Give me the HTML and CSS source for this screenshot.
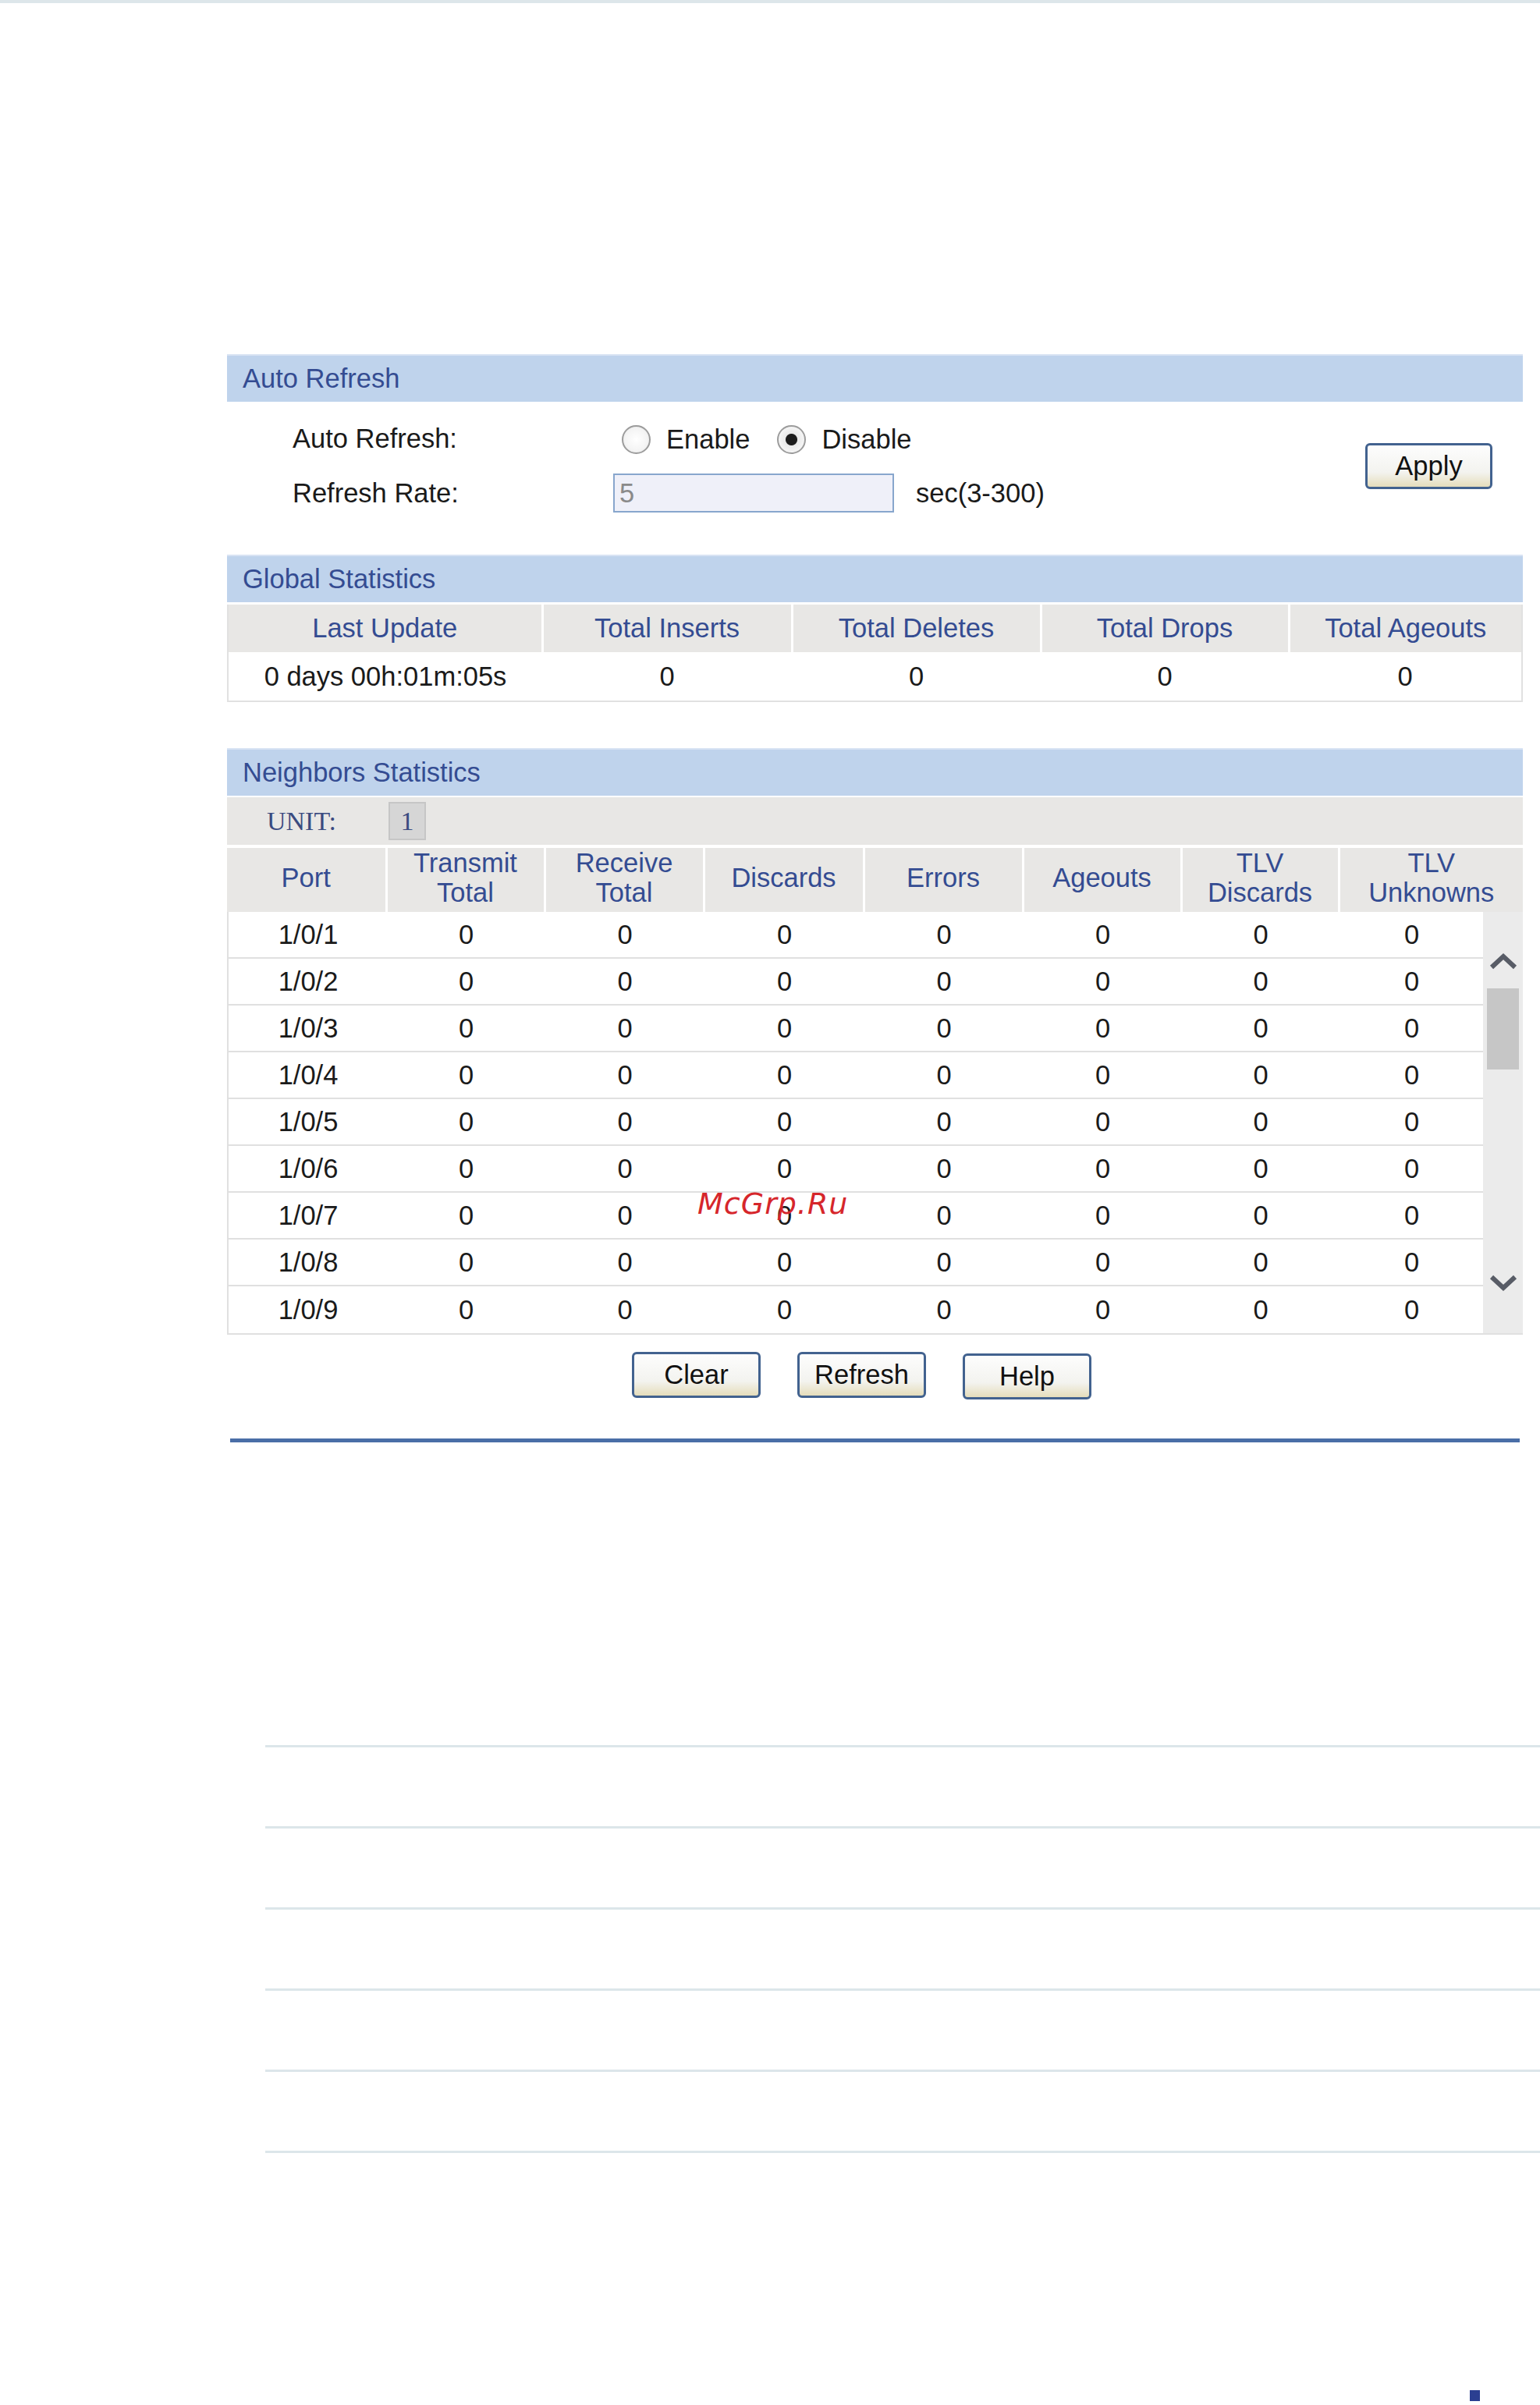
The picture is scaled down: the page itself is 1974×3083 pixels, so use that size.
FILE: index.html
```html
<!DOCTYPE html>
<html lang="en">
<head>
	<meta charset="utf-8">
	<title>LLDP Statistics</title>
	<meta name="viewport" content="width=device-width, initial-scale=1">
	<link rel="stylesheet" href="styles.css">
</head>
<body>
	<div class="topline"></div>
	<div class="panel">
		<div class="bar">Auto Refresh</div>
		<div class="refresh">
			<div class="fields">
				<span class="lbl">Auto Refresh:</span>
				<div class="ctl">
					<input type="radio" name="auto" class="radio" id="en"><label for="en" class="rlabel">Enable</label>
					<input type="radio" name="auto" class="radio" id="dis" checked><label for="dis" class="rlabel">Disable</label>
				</div>
				<span class="lbl">Refresh Rate:</span>
				<div class="ctl">
					<input type="text" class="rate" value="5">
					<span>sec(3-300)</span>
				</div>
			</div>
			<button class="btn apply">Apply</button>
		</div>

		<div class="bar">Global Statistics</div>
		<table class="gtable">
			<colgroup>
				<col style="width:403px"><col style="width:320px"><col style="width:319px"><col style="width:318px"><col>
			</colgroup>
			<tr>
				<th>Last Update</th><th>Total Inserts</th><th>Total Deletes</th><th>Total Drops</th><th>Total Ageouts</th>
			</tr>
			<tr>
				<td>0 days 00h:01m:05s</td><td>0</td><td>0</td><td>0</td><td>0</td>
			</tr>
		</table>

		<div class="bar nb">Neighbors Statistics</div>
		<div class="unit">
			<span>UNIT:</span>
			<span class="unit-box">1</span>
		</div>
		<table class="nhead">
			<colgroup>
				<col style="width:204px"><col style="width:203px"><col style="width:204px"><col style="width:205px"><col style="width:204px"><col style="width:203px"><col style="width:202px"><col>
			</colgroup>
			<tr>
				<th>Port</th><th>Transmit<br>Total</th><th>Receive<br>Total</th><th>Discards</th><th>Errors</th><th>Ageouts</th><th>TLV<br>Discards</th><th>TLV<br>Unknowns</th>
			</tr>
		</table>
		<div class="nbody">
			<table class="ntable">
				<colgroup>
					<col style="width:202px"><col style="width:203px"><col style="width:204px"><col style="width:205px"><col style="width:204px"><col style="width:203px"><col style="width:202px"><col>
				</colgroup>
				<tr><td>1/0/1</td><td>0</td><td>0</td><td>0</td><td>0</td><td>0</td><td>0</td><td>0</td></tr>
				<tr><td>1/0/2</td><td>0</td><td>0</td><td>0</td><td>0</td><td>0</td><td>0</td><td>0</td></tr>
				<tr><td>1/0/3</td><td>0</td><td>0</td><td>0</td><td>0</td><td>0</td><td>0</td><td>0</td></tr>
				<tr><td>1/0/4</td><td>0</td><td>0</td><td>0</td><td>0</td><td>0</td><td>0</td><td>0</td></tr>
				<tr><td>1/0/5</td><td>0</td><td>0</td><td>0</td><td>0</td><td>0</td><td>0</td><td>0</td></tr>
				<tr><td>1/0/6</td><td>0</td><td>0</td><td>0</td><td>0</td><td>0</td><td>0</td><td>0</td></tr>
				<tr><td>1/0/7</td><td>0</td><td>0</td><td>0</td><td>0</td><td>0</td><td>0</td><td>0</td></tr>
				<tr><td>1/0/8</td><td>0</td><td>0</td><td>0</td><td>0</td><td>0</td><td>0</td><td>0</td></tr>
				<tr><td>1/0/9</td><td>0</td><td>0</td><td>0</td><td>0</td><td>0</td><td>0</td><td>0</td></tr>
			</table>
			<div class="sbar">
				<svg class="arrow up" width="36" height="22" viewBox="0 0 36 22"><polyline points="3,19 18,5 33,19" fill="none" stroke="#585c66" stroke-width="6"/></svg>
				<div class="thumb"></div>
				<svg class="arrow down" width="36" height="22" viewBox="0 0 36 22"><polyline points="3,3 18,17 33,3" fill="none" stroke="#585c66" stroke-width="6"/></svg>
			</div>
		</div>
		<div class="actions">
			<button class="btn">Clear</button>
			<button class="btn">Refresh</button>
			<button class="btn help">Help</button>
		</div>
		<div class="rule"></div>
	</div>

	<div class="lines">
		<div class="ln"></div>
		<div class="ln"></div>
		<div class="ln"></div>
		<div class="ln"></div>
		<div class="ln"></div>
		<div class="ln"></div>
	</div>
	<div class="mark"></div>

	<div class="watermark">McGrp.Ru</div>
</body>
</html>
```

FILE: styles.css
```css
body {
	margin: 0;
	font-family: "Liberation Sans", Arial, sans-serif;
	font-size: 34.5px;
	color: #1a1a1a;
	background: #fff;
	position: relative;
}
.topline {
	height: 4px;
	background: #dde6ea;
}
.panel {
	width: 1661px;
	margin: 450px 0 0 291px;
}
.bar {
	height: 61px;
	box-sizing: border-box;
	border-top: 2px solid #d8e3f3;
	background: #bfd3ec;
	color: #344c92;
	padding-left: 20px;
	display: flex;
	align-items: center;
}
.refresh {
	display: flex;
	align-items: center;
	justify-content: space-between;
	padding: 15px 39px 47px 84px;
}
.fields {
	display: grid;
	grid-template-columns: 411px auto;
	grid-auto-rows: 64px;
	row-gap: 6px;
	align-items: center;
}
.ctl {
	display: flex;
	align-items: center;
}
.radio {
	appearance: none;
	-webkit-appearance: none;
	width: 37px;
	height: 37px;
	margin: 2px 20px 0 11px;
	border-radius: 50%;
	border: 2px solid #9c9c9c;
	box-sizing: border-box;
	background: radial-gradient(circle, #ffffff 0, #f4f4f4 60%, #e2e2e2 100%);
}
.radio:checked {
	background: radial-gradient(circle, #1c1c1c 0 7px, #e9e9e9 8px, #ffffff 100%);
}
.rlabel {
	margin: 3px 24px 0 0;
}
.rate {
	width: 360px;
	height: 50px;
	box-sizing: border-box;
	border: 2px solid #88a6cd;
	background: #eff0f9;
	color: #8a8a8a;
	font: inherit;
	padding: 0 6px;
	margin: 0 28px 0 0;
}
.btn {
	width: 165px;
	height: 59px;
	box-sizing: border-box;
	border: 3px solid #42628f;
	border-radius: 6px;
	background: linear-gradient(#fdfdfd, #f3f3ef 65%, #e5ddbb);
	font: inherit;
	color: #111;
	padding: 0;
}
.apply {
	width: 163px;
}
.gtable {
	width: 100%;
	table-layout: fixed;
	border-collapse: collapse;
	margin-top: 3px;
	border: 2px solid #e1e1e1;
	border-top: 0;
}
.gtable th {
	height: 61px;
	background: #e8e7e5;
	color: #344c92;
	font-weight: normal;
	border-left: 3px solid #fff;
	padding: 0;
}
.gtable th:first-child {
	border-left: 0;
}
.gtable td {
	height: 62px;
	text-align: center;
	padding: 0;
}
.nb {
	margin-top: 59px;
}
.unit {
	margin-top: 2px;
	height: 61px;
	background: #e8e7e5;
	display: flex;
	align-items: center;
	padding-left: 51px;
	font-family: "Liberation Serif", "Times New Roman", serif;
	font-size: 34px;
	color: #3a4b80;
}
.unit-box {
	margin-left: 67px;
	width: 48px;
	height: 49px;
	box-sizing: border-box;
	background: #d6d6d6;
	border: 2px solid #c6c6c6;
	display: flex;
	align-items: center;
	justify-content: center;
}
.nhead {
	width: 100%;
	table-layout: fixed;
	border-collapse: collapse;
	margin-top: 4px;
}
.nhead th {
	height: 75px;
	background: #e8e7e5;
	color: #344c92;
	font-weight: normal;
	line-height: 38px;
	border-left: 3px solid #fff;
	padding: 0 0 6px;
}
.nhead th:first-child {
	border-left: 0;
}
.nbody {
	display: flex;
	border-left: 2px solid #e0e0e0;
	border-bottom: 2px solid #e0e0e0;
}
.ntable {
	width: 1608px;
	table-layout: fixed;
	border-collapse: collapse;
}
.ntable td {
	height: 58px;
	text-align: center;
	padding: 0;
	border-bottom: 2px solid #e0e0e0;
	border-left: 2px solid #fff;
}
.ntable tr:last-child td {
	border-bottom: 0;
	height: 60px;
}
.sbar {
	width: 51px;
	flex: none;
	background: #ebebeb;
	display: flex;
	flex-direction: column;
	align-items: center;
}
.arrow.up {
	margin-top: 52px;
}
.thumb {
	margin-top: 24px;
	width: 41px;
	height: 104px;
	background: #c6c6c6;
}
.arrow.down {
	margin-top: 263px;
}
.actions {
	display: flex;
	gap: 47px;
	padding-left: 519px;
	margin-top: 22px;
}
.help {
	margin-top: 2px;
}
.rule {
	margin: 50px 0 0 4px;
	width: 1653px;
	height: 5px;
	background: #4a6ea7;
}
.lines {
	margin: 388px 0 0 340px;
	padding-bottom: 1px;
}
.ln {
	height: 3px;
	background: #dce6ea;
	margin-bottom: 101px;
}
.mark {
	margin: 202px 0 0 1884px;
	width: 13px;
	height: 14px;
	background: #2b3f91;
}
.watermark {
	position: absolute;
	left: 894px;
	top: 1521px;
	font-family: "DejaVu Sans", sans-serif;
	font-style: italic;
	font-size: 38px;
	letter-spacing: 1px;
	color: #d6262b;
}
```
